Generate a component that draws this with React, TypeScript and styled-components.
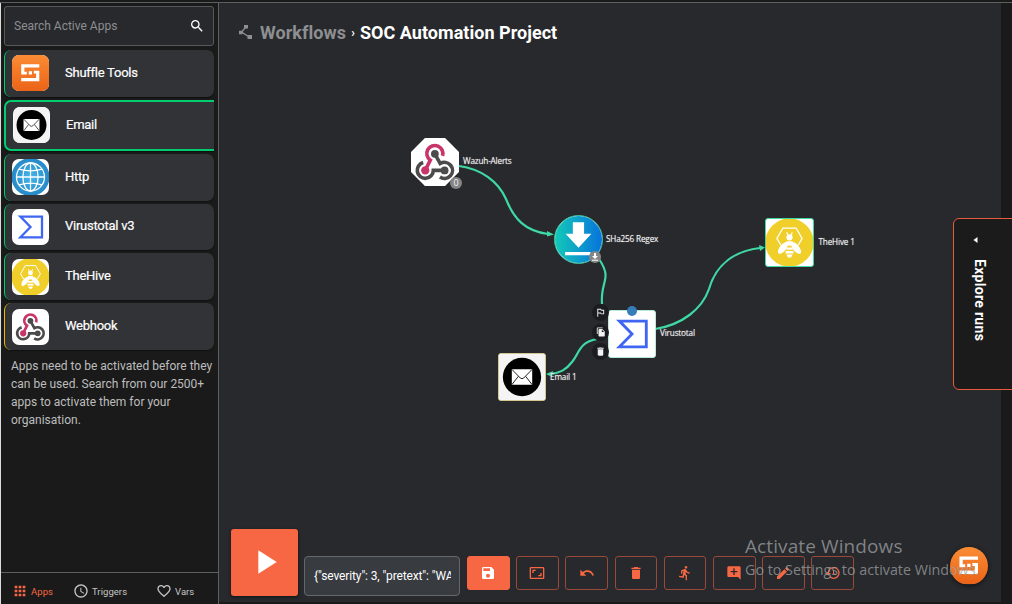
import React from 'react';
import styled, { createGlobalStyle } from 'styled-components';
import {
  MdSearch, MdApps, MdSchedule, MdFavoriteBorder, MdPlayArrow, MdSave, MdAspectRatio, MdUndo,
  MdDelete, MdDirectionsRun, MdAddComment, MdEdit, MdRestore, MdOutlinedFlag, MdFileCopy,
} from 'react-icons/md';

const accent = '#f86743';
const green = '#02cb70';
const edge = '#3fd9a4';

const GlobalStyle = createGlobalStyle`
  * { box-sizing: border-box; }
  body { margin: 0; background: #1a1a1a; font-family: Roboto, sans-serif; color: #fff; }
  svg { display: block; flex: none; }
`;

const Page = styled.div`
  display: flex;
  flex-direction: column;
  width: 1012px;
  height: 604px;
  padding-top: 2px;
  overflow: hidden;
  position: relative;
`;
const Body = styled.div`
  display: flex;
  flex: 1;
  min-height: 0;
  border-top: 1px solid #5c6061;
`;
const Sidebar = styled.aside`
  display: flex;
  flex-direction: column;
  width: 219px;
  border-left: 1px solid #dcdcdc;
  border-right: 1px solid #5d6063;
  background: #1a1a1a;
`;
const AppPane = styled.div`
  flex: 1;
  padding: 3px 4px 0 3px;
`;
const SearchBox = styled.div`
  display: flex;
  align-items: center;
  justify-content: space-between;
  height: 40px;
  padding: 0 8px 0 9px;
  border: 1px solid #56585a;
  border-radius: 3px;
  background: #27292d;
  color: #8c8e90;
  font-size: 12px;
  svg { color: #fff; }
`;
const AppList = styled.div`
  display: flex;
  flex-direction: column;
  gap: 3px;
  padding-top: 4px;
`;
const AppCard = styled.div<{ $color: string; $active?: boolean }>`
  display: flex;
  align-items: center;
  height: ${p => (p.$active ? 51 : 46.8)}px;
  padding-left: 7px;
  gap: 16px;
  background: #323337;
  border-left: 1px solid ${p => p.$color};
  border-radius: 7px;
  font-size: 13px;
  letter-spacing: -0.25px;
  box-shadow: 0 1px 1px #111;
  ${p => p.$active && `
    border: 2px solid ${p.$color};
    border-right: 0;
    border-radius: 7px 0 0 7px;
  `}
`;
const AppName = styled.span`
  padding-bottom: 2px;
  -webkit-text-stroke: 0.2px #fff;
`;
const AppIcon = styled.div`
  width: 37px;
  height: 36px;
  border-radius: 7px;
  overflow: hidden;
  background: #fff;
  svg { width: 100%; height: 100%; }
`;
const Hint = styled.p`
  margin: 7px 0 0 7px;
  width: 206px;
  font-size: 12px;
  line-height: 18px;
  color: #bdbdbd;
  white-space: nowrap;
`;
const TabBar = styled.nav`
  display: flex;
  align-items: center;
  height: 32px;
  border-top: 1px solid #5d6063;
  padding: 5px 0 0 11px;
  font-size: 9.5px;
  letter-spacing: 0.05px;
`;
const Tab = styled.div<{ $active?: boolean; $width: number }>`
  display: flex;
  align-items: center;
  gap: 3px;
  width: ${p => p.$width}px;
  color: ${p => (p.$active ? accent : '#c5c5c5')};
`;
const Canvas = styled.main`
  position: relative;
  display: flex;
  flex-direction: column;
  justify-content: space-between;
  width: 782px;
  margin-bottom: 2px;
  background: #27292d;
`;
const Breadcrumb = styled.header`
  display: flex;
  align-items: center;
  padding: 18px 0 0 20px;
  font-size: 18px;
  line-height: 24px;
  font-weight: 700;
  svg { margin-bottom: 3px; }
`;
const Crumb = styled.span<{ $muted?: boolean }>`
  color: ${p => (p.$muted ? '#8e8f91' : '#fff')};
  margin-left: ${p => (p.$muted ? 8 : 0)}px;
  letter-spacing: 0.03px;
`;
const Chevron = styled.span`
  width: 14px;
  text-align: center;
  font-size: 12px;
`;
const EdgeLayer = styled.svg`
  position: absolute;
  inset: 0;
`;
const Node = styled.div<{ $x: number; $y: number; $size?: number; $border?: string; $shape?: 'octagon' | 'circle' }>`
  position: absolute;
  left: ${p => p.$x - 219}px;
  top: ${p => p.$y - 3}px;
  width: ${p => p.$size ?? 48}px;
  height: ${p => p.$size ?? 48}px;
  overflow: hidden;
  border: ${p => (p.$border ? `1.5px solid ${p.$border}` : '0')};
  border-radius: ${p => (p.$shape === 'circle' ? '50%' : '3px')};
  background: #fff;
  ${p => p.$shape === 'octagon' && 'clip-path: polygon(29% 0, 71% 0, 100% 29%, 100% 71%, 71% 100%, 29% 100%, 0 71%, 0 29%);'}
  svg { width: 100%; height: 100%; }
`;
const NodeLabel = styled.span<{ $x: number; $y: number }>`
  position: absolute;
  left: ${p => p.$x - 219}px;
  top: ${p => p.$y - 3}px;
  font: 8.2px/12px 'Open Sans', sans-serif;
  letter-spacing: -0.17px;
  color: #f2f2f2;
  text-shadow: 0 0 1px #999;
  white-space: nowrap;
`;
const Badge = styled.span<{ $x: number; $y: number; $size: number; $bg: string }>`
  position: absolute;
  left: ${p => p.$x - p.$size / 2 - 219}px;
  top: ${p => p.$y - p.$size / 2 - 3}px;
  width: ${p => p.$size}px;
  height: ${p => p.$size}px;
  display: flex;
  align-items: center;
  justify-content: center;
  border-radius: 50%;
  background: ${p => p.$bg};
  color: #f2f2f2;
  font: 9px/12px 'Open Sans', sans-serif;
`;
const Toolbar = styled.footer`
  display: flex;
  align-items: flex-end;
  padding: 0 0 6px 12px;
`;
const PlayButton = styled.button`
  display: flex;
  align-items: center;
  justify-content: center;
  width: 67px;
  height: 67px;
  padding: 0 0 2px;
  border: 0;
  border-radius: 3px;
  background: ${accent};
  color: #fff;
  box-shadow: 0 1px 3px #111;
`;
const ArgumentField = styled.div`
  width: 156px;
  height: 40px;
  margin: 0 7px 0 6px;
  padding: 0 8px 0 9px;
  border: 1px solid #65686b;
  border-radius: 4px;
  background: #383b40;
  font-size: 12px;
  line-height: 38px;
  letter-spacing: -0.13px;
  span { display: block; overflow: hidden; white-space: nowrap; }
`;
const Actions = styled.div`
  display: flex;
  align-self: flex-end;
  gap: 6.6px;
  padding-bottom: 6px;
`;
const ActionButton = styled.button<{ $filled?: boolean }>`
  display: flex;
  align-items: center;
  justify-content: center;
  width: 42.6px;
  height: 34px;
  padding: 0;
  border: 1px solid ${p => (p.$filled ? accent : '#98493a')};
  border-radius: 3px;
  background: ${p => (p.$filled ? accent : 'transparent')};
  color: ${p => (p.$filled ? '#fff' : accent)};
`;
const ExplorePanel = styled.div`
  position: absolute;
  left: 953px;
  top: 218px;
  width: 66px;
  height: 172px;
  display: flex;
  flex-direction: column;
  align-items: flex-start;
  padding: 18px 0 0 18px;
  gap: 16px;
  border: 1px solid #e8593d;
  border-radius: 6px;
  background: #1b1b1b;
  font-size: 14px;
  font-weight: 700;
  line-height: 16px;
  svg { margin-left: 1px; }
  span { writing-mode: vertical-rl; letter-spacing: 0.3px; }
`;
const HelpButton = styled.div`
  position: absolute;
  left: 950px;
  top: 547px;
  width: 38px;
  height: 38px;
  border-radius: 50%;
  overflow: hidden;
  box-shadow: 0 1px 4px #111;
`;
const Watermark = styled.div`
  position: absolute;
  left: 745px;
  top: 534px;
  font-family: 'Open Sans', sans-serif;
  color: rgba(160, 161, 163, 0.75);
  white-space: nowrap;
`;
const WatermarkTitle = styled.div`
  font-size: 19px;
  line-height: 25px;
  letter-spacing: 0.1px;
`;
const WatermarkText = styled.div`
  font-size: 14.300px;
  line-height: 21px;
`;

const WorkflowIcon = () => (
  <svg width="13" height="14" viewBox="0 0 13 14">
    <path d="M5 0h4v3.600H5zM0 5.700h3.600v3.500H0zM8.500 10H13v4H8.500z" fill="#8e8f91" />
    <path d="M6.500 2.500L2.500 7l7 4.500" fill="none" stroke="#8e8f91" strokeWidth="1.300" />
  </svg>
);
const ShuffleLogo = () => (
  <svg viewBox="0 0 37 36" preserveAspectRatio="none">
    <defs>
      <linearGradient id="shuffle" x1="0" y1="0" x2="0" y2="1">
        <stop offset="0" stopColor="#fb8c34" /><stop offset="1" stopColor="#eb6318" />
      </linearGradient>
    </defs>
    <rect width="37" height="36" fill="url(#shuffle)" />
    <path d="M9.200 9.300H27.300V12.500H12.400V16.800H14.800V19.600H9.200zM27.300 26.200H9.200V23H24.100V18.400H21.800V15.700H27.300zM16.700 16.200h3.300v3.200h-3.300z" fill="#fff" />
  </svg>
);
const EmailLogo = () => (
  <svg viewBox="0 0 37 37">
    <rect width="37" height="37" fill="#f4f4f4" />
    <circle cx="18.5" cy="18.5" r="15.4" fill="#000" />
    <path d="M10.3 12.3h16.4v12.4H10.3z" fill="#fff" />
    <path d="M10.3 12.3l6.8 7q1.4 1.2 2.8 0l6.8-7M10.3 24.7l5.3-6.8M26.7 24.7l-5.3-6.8" fill="none" stroke="#222" strokeWidth=".8" />
  </svg>
);
const HttpLogo = () => (
  <svg viewBox="0 0 37 36">
    <defs>
      <radialGradient id="globe"><stop offset="0" stopColor="#46b8ea" /><stop offset="1" stopColor="#2588c8" /></radialGradient>
    </defs>
    <circle cx="18.5" cy="18" r="19" fill="url(#globe)" />
    <g fill="none" stroke="#fff" strokeWidth="1.3">
      <circle cx="18.5" cy="18" r="14" />
      <ellipse cx="18.5" cy="18" rx="7.6" ry="14" />
      <path d="M18.5 4v28M4.5 18h28M7 10.2q11.500 3.400 23 0M7 25.800q11.500-3.400 23 0" />
    </g>
  </svg>
);
const VirustotalLogo = () => (
  <svg viewBox="0 0 37 36">
    <path d="M8.400 7.600H30v20.700H8.400L18.500 18z" fill="none" stroke="#3f66f2" strokeWidth="2.300" />
  </svg>
);
const HiveLogo = () => (
  <svg viewBox="0 0 37 36">
    <circle cx="18.5" cy="18" r="19" fill="#f1cf2b" />
    <path d="M11.600 20l-3-5.200 4.700-8.200h10.400l4.700 8.200-3 5.200" fill="none" stroke="#fff" strokeWidth="1" />
    <path d="M16.300 10l1.300 3M20.700 10l-1.300 3" stroke="#fff" strokeWidth=".9" />
    <g fill="#fff">
      <circle cx="18.500" cy="14" r="2.400" />
      <ellipse cx="13.300" cy="22.300" rx="2.500" ry="5.500" transform="rotate(38 13.300 22.300)" />
      <ellipse cx="23.700" cy="22.300" rx="2.500" ry="5.500" transform="rotate(-38 23.700 22.300)" />
      <path d="M16 17h5v2l-1 1.500h-3L16 19zM16 22h5v1.700h-5zM15.400 24.700h6.200v1.900h-6.200zM16 27.500h5l-1.300 2.300h-2.400z" />
    </g>
  </svg>
);
const WebhookLogo = () => (
  <svg viewBox="0 0 37 37">
    <g fill="none" strokeWidth="2.800">
      <path d="M24.300 13.800A6.200 6.200 0 1 0 14.900 17.100L11 24.900" stroke="#c9356a" />
      <path d="M18.400 12.200L22.500 19.700A6.200 6.200 0 1 1 22.300 30.100M9.400 18.900A6.200 6.200 0 1 0 17.200 25H25.700" stroke="#4b4b4b" />
    </g>
    <circle cx="11" cy="25" r="3.200" fill="#c9356a" />
    <circle cx="18.400" cy="12.200" r="3" fill="#4b4b4b" />
    <circle cx="25.900" cy="25" r="3" fill="#4b4b4b" />
  </svg>
);
const DownloadLogo = () => (
  <svg viewBox="0 0 48 48">
    <defs>
      <linearGradient id="download"><stop offset="0" stopColor="#12c9b8" /><stop offset="1" stopColor="#0873dc" /></linearGradient>
    </defs>
    <rect width="48" height="48" fill="url(#download)" />
    <path d="M18.200 6.500h11.500v11.500h7.500L24 32.300 10.800 18h7.400zM10.300 36.700h26v3.500h-26z" fill="#fff" />
  </svg>
);

const apps = [
  { name: 'Shuffle Tools', Logo: ShuffleLogo, color: green },
  { name: 'Email', Logo: EmailLogo, color: green, active: true },
  { name: 'Http', Logo: HttpLogo, color: green },
  { name: 'Virustotal v3', Logo: VirustotalLogo, color: green },
  { name: 'TheHive', Logo: HiveLogo, color: green },
  { name: 'Webhook', Logo: WebhookLogo, color: '#e9b710' },
];
const actions = [MdAspectRatio, MdUndo, MdDelete, MdDirectionsRun, MdAddComment, MdEdit, MdRestore];

export default function App() {
  return (
    <Page>
      <GlobalStyle />
      <Body>
        <Sidebar>
          <AppPane>
            <SearchBox>Search Active Apps<MdSearch size={16} /></SearchBox>
            <AppList>
              {apps.map(({ name, Logo, color, active }) => (
                <AppCard key={name} $color={color} $active={active}>
                  <AppIcon><Logo /></AppIcon><AppName>{name}</AppName>
                </AppCard>
              ))}
            </AppList>
            <Hint>
              Apps need to be activated before they<br />can be used. Search from our 2500+<br />
              apps to activate them for your<br />organisation.
            </Hint>
          </AppPane>
          <TabBar>
            <Tab $active $width={61}><MdApps size={16} />Apps</Tab>
            <Tab $width={83}><MdSchedule size={16} />Triggers</Tab>
            <Tab $width={50}><MdFavoriteBorder size={16} />Vars</Tab>
          </TabBar>
        </Sidebar>
        <Canvas>
          <Breadcrumb>
            <WorkflowIcon />
            <Crumb $muted>Workflows</Crumb><Chevron>›</Chevron><Crumb>SOC Automation Project</Crumb>
          </Breadcrumb>
          <EdgeLayer width="782" height="599" viewBox="219 3 782 599">
            <g fill="none" stroke={edge} strokeWidth="2.200">
              <path d="M459 166C481 169 498 181 506 199C514 219 525 231 548 234" />
              <path d="M599 259C613 280 600 280 602 304" />
              <path d="M655 329C682 325 702 309 709 289C716 264 735 251 760 248" />
              <path d="M597 339C579 342 579 354 572 362C566 370 560 373 550 374" />
            </g>
            <path d="M547 231l7 3.500-7 2zM759 245l6 2.500-5 3.500zM553 371l-7 3 6 3z" fill={edge} />
          </EdgeLayer>
          <Node $x={411} $y={138} $shape="octagon"><WebhookLogo /></Node>
          <NodeLabel $x={463} $y={155}>Wazuh-Alerts</NodeLabel>
          <Badge $x={456} $y={182.500} $size={12} $bg="#858585">0</Badge>
          <Node $x={554} $y={214.500} $size={49} $shape="circle" $border="#36b98f"><DownloadLogo /></Node>
          <NodeLabel $x={606} $y={232.500}>SHa256 Regex</NodeLabel>
          <Badge $x={595} $y={256.500} $size={12} $bg="#858585">
            <svg width="8" height="8" viewBox="0 0 8 8"><path d="M3 0h2v3h2L4 6 1 3h2zM1 6.700h6v1H1z" fill="#fff" /></svg>
          </Badge>
          <Node $x={765.400} $y={217.500} $size={49} $border={edge}><HiveLogo /></Node>
          <NodeLabel $x={818.500} $y={236}>TheHive 1</NodeLabel>
          <Node $x={607.500} $y={310} $border="#b9e9d7"><VirustotalLogo /></Node>
          <NodeLabel $x={660} $y={327}>Virustotal</NodeLabel>
          <Badge $x={631.500} $y={310.500} $size={10} $bg="#367db9" />
          <Badge $x={600.500} $y={312.500} $size={17} $bg="#1b1c1f"><MdOutlinedFlag size={11} /></Badge>
          <Badge $x={600.500} $y={332} $size={17} $bg="#1b1c1f"><MdFileCopy size={10} /></Badge>
          <Badge $x={600.500} $y={351} $size={17} $bg="#1b1c1f"><MdDelete size={11} /></Badge>
          <Node $x={497.500} $y={353} $border="#d3c790"><EmailLogo /></Node>
          <NodeLabel $x={550} $y={371}>Email 1</NodeLabel>
          <Toolbar>
            <PlayButton><MdPlayArrow size={40} /></PlayButton>
            <ArgumentField><span>{'{"severity": 3, "pretext": "WA'}</span></ArgumentField>
            <Actions>
              <ActionButton $filled><MdSave size={16} /></ActionButton>
              {actions.map((Icon, i) => <ActionButton key={i}><Icon size={16} /></ActionButton>)}
            </Actions>
          </Toolbar>
        </Canvas>
      </Body>
      <ExplorePanel>
        <svg width="5" height="6" viewBox="0 0 5 6"><path d="M4.500 0v6L.5 3z" fill="#fff" /></svg>
        <span>Explore runs</span>
      </ExplorePanel>
      <HelpButton><ShuffleLogo /></HelpButton>
      <Watermark>
        <WatermarkTitle>Activate Windows</WatermarkTitle>
        <WatermarkText>Go to Settings to activate Windows.</WatermarkText>
      </Watermark>
    </Page>
  );
}
